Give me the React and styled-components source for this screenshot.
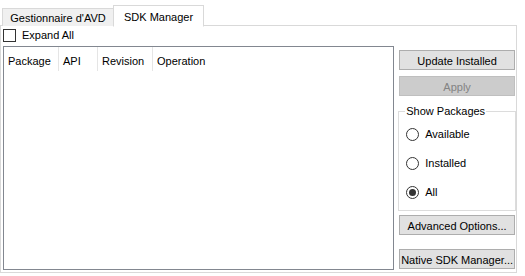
import React from "react";
import styled, { createGlobalStyle } from "styled-components";

const GlobalStyle = createGlobalStyle`
  html, body {
    margin: 0;
    padding: 0;
    background: #ffffff;
  }
  body {
    font-family: "Liberation Sans", Arial, sans-serif;
    font-size: 11px;
    color: #000;
  }
`;

const App = () => {
  return (
    <Window>
      <GlobalStyle />
      <TabStrip>
        <Tab>Gestionnaire d'AVD</Tab>
        <Tab active>SDK Manager</Tab>
      </TabStrip>
      <TabPanel>
        <CheckRow>
          <CheckBox />
          <span>Expand All</span>
        </CheckRow>
        <Body>
          <ListBox>
            <HeaderRow>
              <HeaderCell width={55}>Package</HeaderCell>
              <HeaderCell width={39}>API</HeaderCell>
              <HeaderCell width={55}>Revision</HeaderCell>
              <HeaderCell width={70} last>Operation</HeaderCell>
            </HeaderRow>
          </ListBox>
          <SideColumn>
            <Button>Update Installed</Button>
            <Button disabled mt={6}>Apply</Button>
            <GroupBox>
              <Legend>Show Packages</Legend>
              <RadioRow>
                <Radio />
                <span>Available</span>
              </RadioRow>
              <RadioRow>
                <Radio />
                <span>Installed</span>
              </RadioRow>
              <RadioRow>
                <Radio checked />
                <span>All</span>
              </RadioRow>
            </GroupBox>
            <Button mt={4}>Advanced Options...</Button>
            <Button mt={14}>Native SDK Manager...</Button>
          </SideColumn>
        </Body>
      </TabPanel>
    </Window>
  );
};

export default App;

const Window = styled.div`
  width: 525px;
  height: 276px;
`;

const TabStrip = styled.div`
  display: flex;
  align-items: flex-end;
  height: 26px;
  padding-left: 2px;
  position: relative;
  z-index: 1;
`;

const Tab = styled.div`
  box-sizing: border-box;
  width: ${({ active }) => (active ? "91px" : "112px")};
  height: ${({ active }) => (active ? "22px" : "18px")};
  margin-left: ${({ active }) => (active ? "-1px" : "0")};
  margin-bottom: ${({ active }) => (active ? "-1px" : "0")};
  padding-top: 1px;
  display: flex;
  align-items: center;
  justify-content: center;
  background: ${({ active }) => (active ? "#ffffff" : "#f0f0f0")};
  border: 1px solid #d9d9d9;
  border-bottom: ${({ active }) => (active ? "1px solid #ffffff" : "none")};
  white-space: nowrap;
`;

const TabPanel = styled.div`
  box-sizing: border-box;
  width: 517px;
  height: 248px;
  margin-top: -1px;
  border: 1px solid #d9d9d9;
  background: #ffffff;
  padding: 2px 1px 2px 1px;
  display: flex;
  flex-direction: column;
`;

const CheckRow = styled.label`
  display: flex;
  align-items: center;
  gap: 6px;
  height: 16px;
  margin-left: 1px;
`;

const CheckBox = styled.span`
  box-sizing: border-box;
  width: 13px;
  height: 13px;
  border: 1px solid #333333;
  background: #ffffff;
`;

const Body = styled.div`
  display: flex;
  gap: 5px;
  margin-top: 4px;
  flex: 1;
`;

const ListBox = styled.div`
  box-sizing: border-box;
  width: 392px;
  height: 224px;
  margin-left: 1px;
  border: 1px solid #828790;
  background: #ffffff;
`;

const HeaderRow = styled.div`
  display: flex;
  height: 24px;
`;

const HeaderCell = styled.div`
  box-sizing: border-box;
  width: ${({ width }) => width}px;
  padding: 4px 0 0 4px;
  display: flex;
  align-items: center;
  border-right: ${({ last }) => (last ? "none" : "1px solid #e5e5e5")};
  white-space: nowrap;
`;

const SideColumn = styled.div`
  display: flex;
  flex-direction: column;
  width: 116px;
  padding-top: 4px;
`;

const Button = styled.div`
  box-sizing: border-box;
  height: 20px;
  margin-top: ${({ mt }) => mt || 0}px;
  padding-top: 1px;
  display: flex;
  align-items: center;
  justify-content: center;
  background: ${({ disabled }) => (disabled ? "#cccccc" : "#e1e1e1")};
  border: 1px solid ${({ disabled }) => (disabled ? "#bfbfbf" : "#adadad")};
  color: ${({ disabled }) => (disabled ? "#838383" : "#000000")};
  white-space: nowrap;
`;

const GroupBox = styled.fieldset`
  box-sizing: border-box;
  margin: 9px -1px 0 -1px;
  padding: 9px 0 0 7px;
  height: 106px;
  border: 1px solid #dcdcdc;
  display: flex;
  flex-direction: column;
  gap: 13px;
`;

const Legend = styled.legend`
  padding: 0 1px;
  margin-left: -1px;
`;

const RadioRow = styled.div`
  display: flex;
  align-items: center;
  gap: 6px;
  height: 16px;
`;

const Radio = styled.span`
  box-sizing: border-box;
  width: 13px;
  height: 13px;
  border-radius: 50%;
  border: 1px solid #333333;
  background: #ffffff;
  display: flex;
  align-items: center;
  justify-content: center;
  &::after {
    content: "";
    display: ${({ checked }) => (checked ? "block" : "none")};
    width: 7px;
    height: 7px;
    border-radius: 50%;
    background: #333333;
  }
`;
